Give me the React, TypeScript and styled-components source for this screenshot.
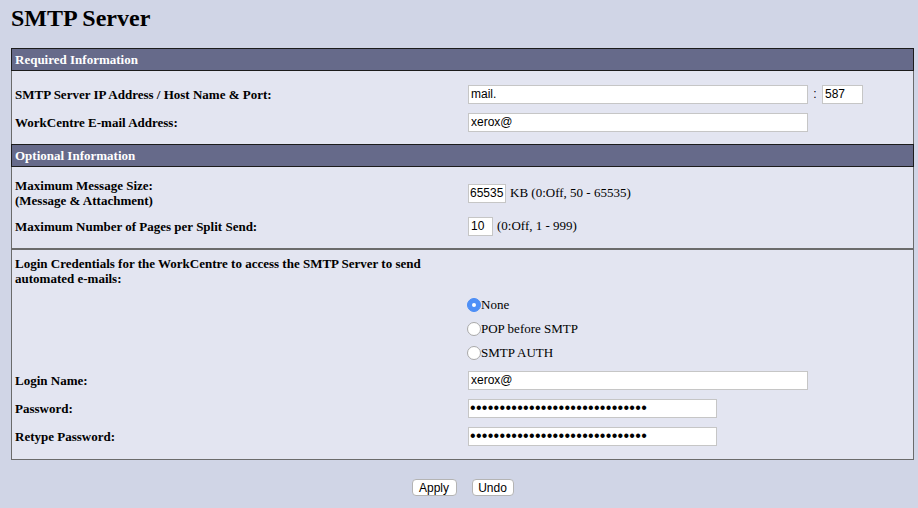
import React from 'react';
import styled, { createGlobalStyle } from 'styled-components';

const GlobalStyle = createGlobalStyle`
  html, body {
    margin: 0;
    padding: 0;
    background: #d0d5e6;
  }
  body {
    font-family: "Liberation Serif", "Times New Roman", serif;
    color: #000;
  }
`;

const Page = styled.div`
  padding: 4px 4px 12px 11px;
`;

const Title = styled.h1`
  margin: 0 0 16px 0;
  font-size: 24px;
  line-height: 28px;
  font-weight: bold;
`;

const SectionHeader = styled.div`
  height: 21px;
  line-height: 21px;
  border: 1px solid #1c1c1c;
  background: #666a8a;
  color: #fff;
  font-size: 13px;
  font-weight: bold;
  padding-left: 3px;
`;

const SectionBody = styled.div<{ $top: number; $bottom: number; $rule?: 'thick' | 'thin' }>`
  background: #e3e5f1;
  border-left: 1px solid #6b6b6b;
  border-right: 1px solid #6b6b6b;
  border-bottom: ${p => (p.$rule === 'thick' ? '2px solid #6b6b6b' : p.$rule === 'thin' ? '1px solid #6b6b6b' : 'none')};
  padding-top: ${p => p.$top}px;
  padding-bottom: ${p => p.$bottom}px;
`;

const Row = styled.div<{ $height?: number }>`
  display: grid;
  grid-template-columns: 456px 1fr;
  align-items: center;
  min-height: ${p => p.$height ?? 28}px;
`;

const Label = styled.div`
  padding-left: 3px;
  font-size: 13px;
  line-height: 15px;
  font-weight: bold;
`;

const Field = styled.div`
  display: flex;
  align-items: center;
  font-size: 13px;
`;

const TextInput = styled.input<{ $width: number; $tight?: boolean }>`
  box-sizing: border-box;
  width: ${p => p.$width}px;
  height: 19px;
  margin: 0;
  padding: ${p => (p.$tight ? '0 1px' : '0 2px')};
  border: 1px solid #c6c6c6;
  background: #fff;
  font-family: "Liberation Sans", Arial, sans-serif;
  font-size: 12px;
  color: #000;
  outline: none;
`;

const PasswordInput = styled(TextInput)`
  font-size: 16px;
  letter-spacing: 0.3px;
  padding: 0 2px 0 1px;
`;

const Colon = styled.span`
  width: 14px;
  text-align: center;
  font-family: "Liberation Sans", Arial, sans-serif;
  font-size: 12px;
`;

const Hint = styled.span`
  margin-left: 4px;
  font-size: 13px;
`;

const RadioGroup = styled.div`
  padding: 3px 0 1px;
`;

const RadioLabel = styled.label`
  display: flex;
  align-items: center;
  font-size: 13px;
`;

const Radio = styled.input`
  appearance: none;
  box-sizing: border-box;
  width: 14px;
  height: 14px;
  margin: 0 0 0 -1px;
  border-radius: 50%;
  border: 1px solid #a9a9a9;
  background: #fff;
  position: relative;
  &:checked {
    border-color: #4a8cf6;
    background: #4f90f7;
  }
  &:checked::after {
    content: '';
    position: absolute;
    left: 4px;
    top: 4px;
    width: 4px;
    height: 4px;
    border-radius: 50%;
    background: #fff;
  }
`;

const Buttons = styled.div`
  display: flex;
  justify-content: center;
  gap: 15px;
  margin-top: 19px;
`;

const Button = styled.button<{ $width: number }>`
  box-sizing: border-box;
  width: ${p => p.$width}px;
  height: 17px;
  padding: 0;
  border: 1px solid #b4b4b4;
  border-radius: 4px;
  background: #fff;
  font-family: "Liberation Sans", Arial, sans-serif;
  font-size: 12px;
  color: #000;
`;

const RadioRow: React.FC<{ text: string; checked?: boolean }> = ({ text, checked }) => (
  <Row $height={24}>
    <div />
    <RadioLabel>
      <Radio type="radio" name="auth" defaultChecked={checked} />
      {text}
    </RadioLabel>
  </Row>
);

const dots = '123456789012345678901234567890';

export default function App() {
  return (
    <Page>
      <GlobalStyle />
      <Title>SMTP Server</Title>

      <SectionHeader>Required Information</SectionHeader>
      <SectionBody $top={9} $bottom={8}>
        <Row>
          <Label>SMTP Server IP Address / Host Name &amp; Port:</Label>
          <Field>
            <TextInput $width={340} defaultValue="mail." />
            <Colon>:</Colon>
            <TextInput $width={41} defaultValue="587" />
          </Field>
        </Row>
        <Row>
          <Label>WorkCentre E-mail Address:</Label>
          <Field>
            <TextInput $width={340} defaultValue="xerox@" />
          </Field>
        </Row>
      </SectionBody>

      <SectionHeader>Optional Information</SectionHeader>
      <SectionBody $top={7} $bottom={8} $rule="thick">
        <Row $height={38}>
          <Label>
            Maximum Message Size:
            <br />
            (Message &amp; Attachment)
          </Label>
          <Field>
            <TextInput $width={38} $tight defaultValue="65535" />
            <Hint>KB (0:Off, 50 - 65535)</Hint>
          </Field>
        </Row>
        <Row>
          <Label>Maximum Number of Pages per Split Send:</Label>
          <Field>
            <TextInput $width={25} defaultValue="10" />
            <Hint>(0:Off, 1 - 999)</Hint>
          </Field>
        </Row>
      </SectionBody>

      <SectionBody $top={2} $bottom={9} $rule="thin">
        <Row $height={38}>
          <Label>
            Login Credentials for the WorkCentre to access the SMTP Server to send
            <br />
            automated e-mails:
          </Label>
          <div />
        </Row>
        <RadioGroup>
          <RadioRow text="None" checked />
          <RadioRow text="POP before SMTP" />
          <RadioRow text="SMTP AUTH" />
        </RadioGroup>
        <Row>
          <Label>Login Name:</Label>
          <Field>
            <TextInput $width={340} defaultValue="xerox@" />
          </Field>
        </Row>
        <Row>
          <Label>Password:</Label>
          <Field>
            <PasswordInput $width={249} type="password" defaultValue={dots} />
          </Field>
        </Row>
        <Row>
          <Label>Retype Password:</Label>
          <Field>
            <PasswordInput $width={249} type="password" defaultValue={dots} />
          </Field>
        </Row>
      </SectionBody>

      <Buttons>
        <Button $width={45}>Apply</Button>
        <Button $width={42}>Undo</Button>
      </Buttons>
    </Page>
  );
}
